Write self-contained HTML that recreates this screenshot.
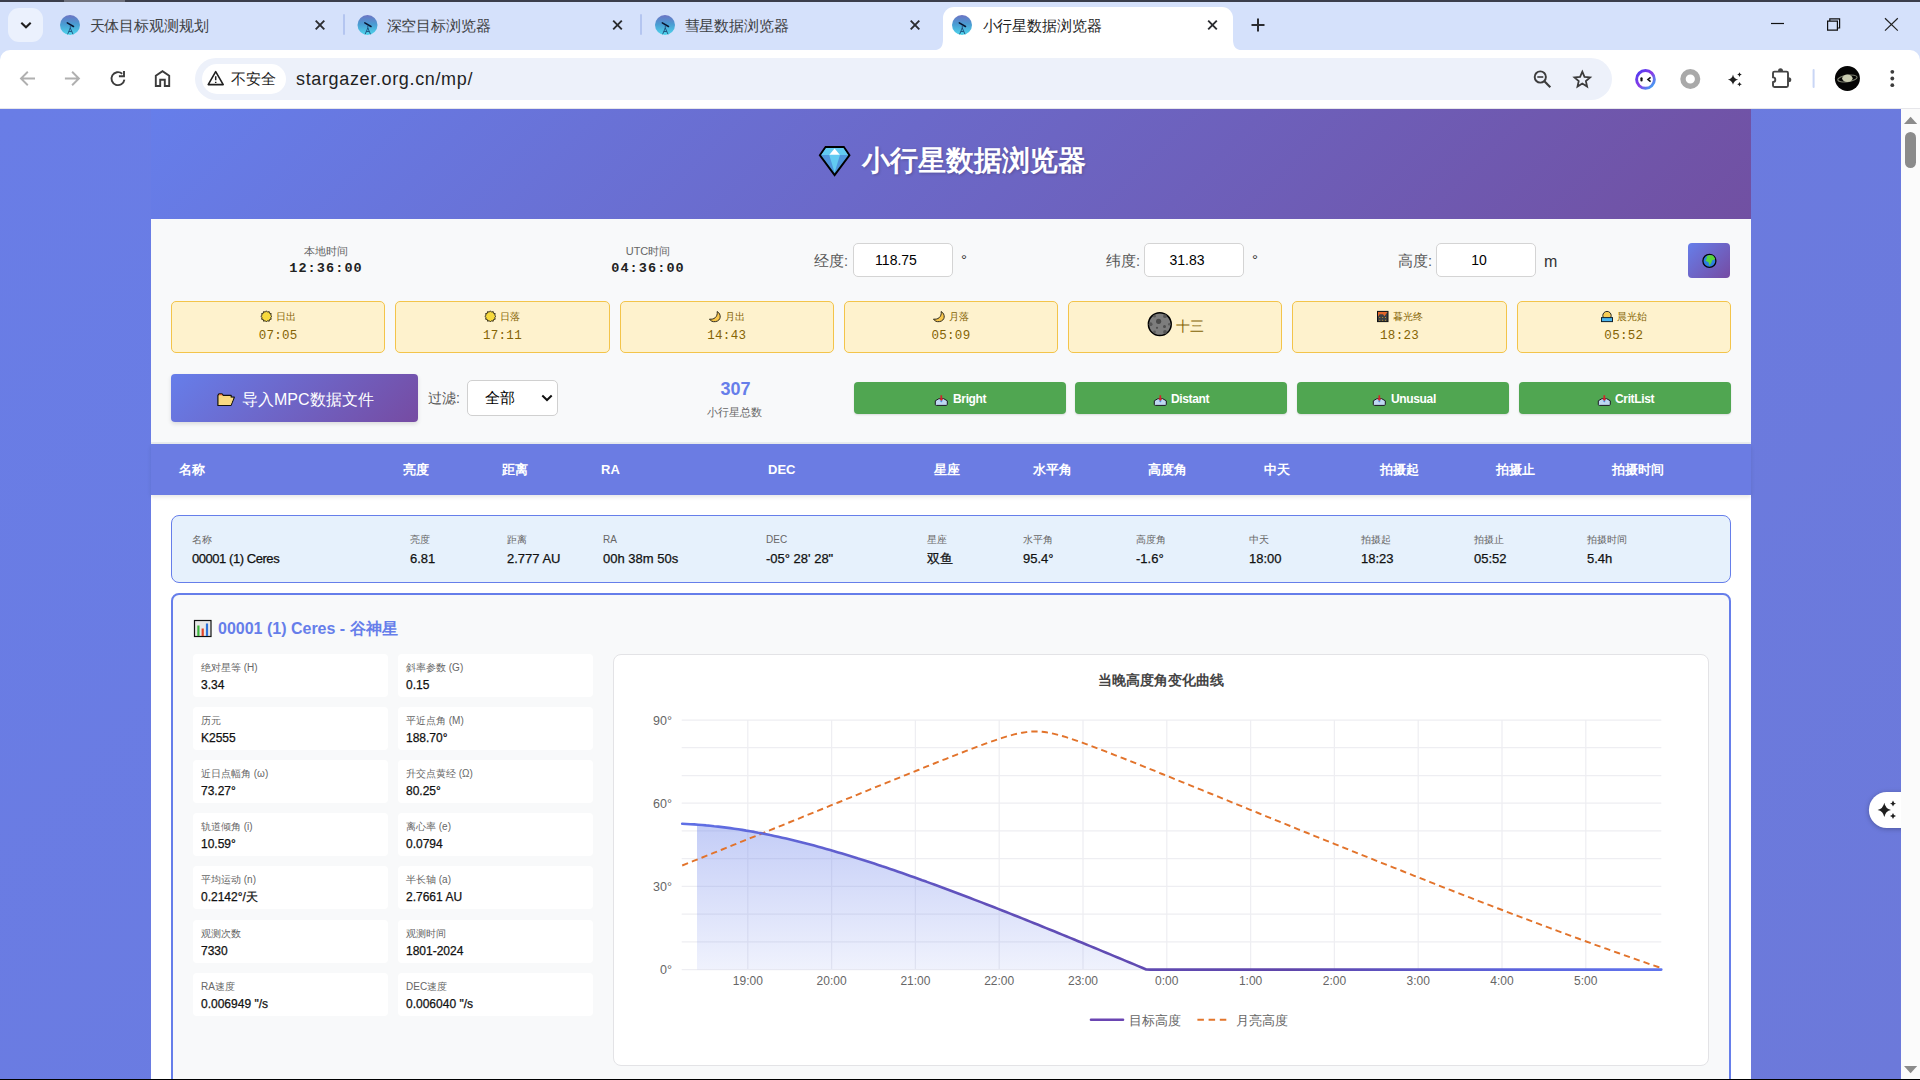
<!DOCTYPE html>
<html lang="zh">
<head>
<meta charset="utf-8">
<title>小行星数据浏览器</title>
<style>
*{box-sizing:border-box;margin:0;padding:0}
html,body{width:1920px;height:1080px;overflow:hidden;background:#fff}
body{font-family:"Liberation Sans",sans-serif;position:relative;color:#000}
.abs{position:absolute}
svg{display:block;position:absolute;overflow:visible}
/* ---------- browser chrome ---------- */
#topline{left:0;top:0;width:1920px;height:2px;background:#3b3e4b}
#topline2{left:64px;top:0;width:61px;height:2px;background:#6f717d}
#tabbar{left:0;top:2px;width:1920px;height:60px;background:#d5e1fb}
#tabsearch{left:8px;top:8px;width:35px;height:34px;border-radius:11px;background:#ebf1fd}
.tabtitle{position:absolute;top:16.5px;margin-left:-0.5px;font-size:15px;line-height:18px;color:#3d4043;white-space:nowrap;letter-spacing:-0.1px}
.tabsep{position:absolute;top:14px;width:2px;height:21px;background:#b4c5f0;border-radius:1px}
#acttab{left:943px;top:7px;width:290px;height:44px;background:#fff;border-radius:11px 11px 0 0}
#toolbar{left:0;top:50px;width:1920px;height:58px;background:#fff;border-radius:10px 10px 0 0}
#tbline{left:0;top:108px;width:1920px;height:1px;background:#e6e6ea}
#omni{left:195px;top:58px;width:1417px;height:42px;border-radius:21px;background:#edf1fa}
#chip{left:202px;top:64px;width:84px;height:30px;border-radius:15px;background:#fff}
#chiptxt{left:231px;top:70px;font-size:15px;line-height:18px;color:#1f1f1f;white-space:nowrap}
#url{left:296px;top:67px;font-size:18px;line-height:24px;color:#1f1f1f;white-space:nowrap;letter-spacing:0.65px}
/* ---------- page ---------- */
#page{left:0;top:109px;width:1901px;height:971px;background:linear-gradient(135deg,#697de6 0%,#6c79da 100%);overflow:hidden}
#sbar{left:1901px;top:109px;width:19px;height:971px;background:#fbfbfb}
#sthumb{left:1905px;top:132px;width:11px;height:36px;border-radius:6px;background:#8b8b8b}
#hdr{left:151px;top:0;width:1600px;height:110px;background:linear-gradient(135deg,#667eea 0%,#7150a2 100%)}
#title{left:711px;top:34px;text-align:left;color:#fff;font-size:28px;line-height:36px;font-weight:bold;white-space:nowrap;text-shadow:1px 1px 3px rgba(0,0,0,.22)}
#ctrl{left:151px;top:110px;width:1600px;height:223px;background:#f8f9fa}
#ctrlline{left:151px;top:333px;width:1600px;height:2px;background:#e9ecef}
#thead{left:151px;top:335px;width:1600px;height:51px;background:#6b7ce3;box-shadow:0 2px 4px rgba(0,0,0,.1);z-index:2}
#white{left:151px;top:386px;width:1600px;height:600px;background:#fff}

/* ---------- controls ---------- */
.tlabel{position:absolute;width:200px;text-align:center;font-size:11px;line-height:14px;color:#666;white-space:nowrap}
.tval{position:absolute;width:200px;text-align:center;font-family:"Liberation Mono",monospace;font-weight:bold;font-size:13.5px;line-height:16px;color:#222;white-space:nowrap;letter-spacing:1.1px}
.flabel{position:absolute;font-size:14.5px;line-height:18px;color:#555;white-space:nowrap}
.finput{position:absolute;width:100px;height:34px;background:#fff;border:1px solid #d4d4d4;border-radius:5px;font-size:14px;line-height:32px;text-align:center;color:#000;padding-right:14px}
.funit{position:absolute;font-size:15px;line-height:18px;color:#333}
#globe{left:1537px;top:24px;width:42px;height:35px;border-radius:4px;background:linear-gradient(135deg,#667eea 0%,#764ba2 100%)}
.sun{position:absolute;top:82px;width:214.3px;height:52px;background:#fef2cd;border:1px solid #f3c44a;border-radius:5px;color:#856404;text-align:center}
.sun .l{position:absolute;left:0;top:9px;width:100%;font-size:10px;line-height:12px;white-space:nowrap;padding-left:16px}
.sun .v{position:absolute;left:0;top:27px;width:100%;font-family:"Liberation Mono",monospace;font-size:12.5px;line-height:14px;letter-spacing:0.3px;white-space:nowrap}
#import{left:20px;top:155px;width:247px;height:48px;border-radius:4px;background:linear-gradient(135deg,#667eea 0%,#764ba2 100%);color:#fff;font-size:16px;line-height:51px;white-space:nowrap;padding-left:71px;box-shadow:0 2px 4px rgba(0,0,0,.12)}
#filtl{left:277px;top:170px;font-size:14px;line-height:18px;color:#555;white-space:nowrap}
#filts{left:316px;top:161px;width:91px;height:36px;background:#fff;border:1px solid #d0d0d0;border-radius:5px;font-size:14.5px;line-height:34px;padding-left:16.500px;color:#000}
#cnt{left:484.500px;top:159px;width:200px;text-align:center;font-size:18px;line-height:22px;font-weight:bold;color:#667eea}
#cntl{left:483px;top:186px;width:200px;text-align:center;font-size:11px;line-height:14px;color:#666;white-space:nowrap}
.gbtn{position:absolute;top:163px;width:211.5px;height:32px;border-radius:4px;background:#50a651;color:#fff;font-size:12px;font-weight:bold;line-height:34px;white-space:nowrap;box-shadow:0 1px 2px rgba(0,0,0,.12);letter-spacing:-0.35px}
.gbtn span{position:absolute;top:0}
/* ---------- table ---------- */
.th{position:absolute;top:18px;font-size:13px;line-height:16px;font-weight:bold;color:#fff;white-space:nowrap}
#row{left:20px;top:20px;width:1560px;height:68px;background:#e6f1fc;border:1px solid #667eea;border-radius:8px}
.rl{position:absolute;top:18px;font-size:10px;line-height:12px;color:#666;white-space:nowrap}
.rv{position:absolute;top:35px;font-size:13px;line-height:16px;color:#111;white-space:nowrap;-webkit-text-stroke:0.25px #111}
#detail{left:20px;top:98px;width:1560px;height:600px;background:#f8f9fa;border:2px solid #667eea;border-radius:8px}
#dtitle{left:45px;top:24px;font-size:16px;line-height:20px;font-weight:bold;color:#667eea;white-space:nowrap}
.pc{position:absolute;width:195px;height:43px;background:#fff;border-radius:4px}
.pc .l{position:absolute;left:8px;top:8px;font-size:10px;line-height:12px;color:#666;white-space:nowrap}
.pc .v{position:absolute;left:8px;top:24px;font-size:12px;line-height:15px;color:#111;white-space:nowrap;-webkit-text-stroke:0.25px #111}
#chart{left:440px;top:59px;width:1096px;height:412px;background:#fff;border:1px solid #e3e3e6;border-radius:8px}
#ctitle{left:0;top:17px;width:1094px;text-align:center;font-size:14px;line-height:16px;font-weight:bold;color:#444;white-space:nowrap}

.yl{position:absolute;left:622px;width:50px;text-align:right;font-size:12.5px;line-height:16px;color:#666;white-space:nowrap}
.xl{position:absolute;top:973px;width:60px;text-align:center;font-size:12px;line-height:16px;color:#666;white-space:nowrap}
.lg{position:absolute;top:1012.5px;font-size:12.7px;line-height:16px;color:#666;white-space:nowrap}
</style>
</head>
<body>
<!-- ======== browser chrome ======== -->
<div class="abs" id="tabbar"></div>
<div class="abs" id="topline"></div>
<div class="abs" id="topline2"></div>
<div class="abs" id="tabsearch"></div>
<div class="abs" id="toolbar"></div>
<div class="abs" id="acttab"></div>
<div class="abs" id="tbline"></div>
<div class="abs" id="omni"></div>
<div class="abs" id="chip"></div>
<div class="abs" id="chiptxt">不安全</div>
<div class="abs" id="url">stargazer.org.cn/mp/</div>
<div class="tabtitle" style="left:90px">天体目标观测规划</div>
<div class="tabtitle" style="left:387px">深空目标浏览器</div>
<div class="tabtitle" style="left:685px">彗星数据浏览器</div>
<div class="tabtitle" style="left:983px;color:#1f1f1f">小行星数据浏览器</div>
<div class="tabsep" style="left:343px"></div>
<div class="tabsep" style="left:640px"></div>

<svg id="chromeicons" width="1920" height="110" viewBox="0 0 1920 110" style="left:0;top:0">
  <defs>
    <linearGradient id="fav" x1="0" y1="0" x2="0" y2="1"><stop offset="0" stop-color="#6d74c4"/><stop offset=".45" stop-color="#4a9bd2"/><stop offset="1" stop-color="#4ed6ec"/></linearGradient>
    <linearGradient id="ext1" x1="0" y1="0" x2="1" y2="1"><stop offset="0" stop-color="#4a3cf2"/><stop offset=".5" stop-color="#8a3be6"/><stop offset="1" stop-color="#35b5f5"/></linearGradient>
  </defs>
  <!-- active tab flares -->
  <path d="M932.500 50.500 Q943 50.500 943 40 V50.500 Z" fill="#fff"/>
  <path d="M1243.500 50.500 Q1233 50.500 1233 40 V50.500 Z" fill="#fff"/>
  <!-- tab search chevron -->
  <path d="M21.3 22.8 L26 27.3 L30.7 22.8" stroke="#1f1f1f" stroke-width="2.1" fill="none"/>
  <!-- favicons -->
  <g transform="translate(70 25)">
      <circle cx="0" cy="0" r="10" fill="url(#fav)"/>
      <path d="M-2.700 -2.100 L3.500 1.500" stroke="#0b1630" stroke-width="1.500" stroke-linecap="round" fill="none"/>
      <path d="M0.3 0.5 L0.3 4 M0.3 3 L-2.4 9.3 M0.3 3 L3 9.3 M-1.2 6.5 L1.8 6.5" stroke="#1d4f7c" stroke-width="0.9" fill="none"/>
    </g>
  <g transform="translate(367.5 25)">
      <circle cx="0" cy="0" r="10" fill="url(#fav)"/>
      <path d="M-2.700 -2.100 L3.500 1.500" stroke="#0b1630" stroke-width="1.500" stroke-linecap="round" fill="none"/>
      <path d="M0.3 0.5 L0.3 4 M0.3 3 L-2.4 9.3 M0.3 3 L3 9.3 M-1.2 6.5 L1.8 6.5" stroke="#1d4f7c" stroke-width="0.9" fill="none"/>
    </g>
  <g transform="translate(665 25)">
      <circle cx="0" cy="0" r="10" fill="url(#fav)"/>
      <path d="M-2.700 -2.100 L3.500 1.500" stroke="#0b1630" stroke-width="1.500" stroke-linecap="round" fill="none"/>
      <path d="M0.3 0.5 L0.3 4 M0.3 3 L-2.4 9.3 M0.3 3 L3 9.3 M-1.2 6.5 L1.8 6.5" stroke="#1d4f7c" stroke-width="0.9" fill="none"/>
    </g>
  <g transform="translate(962 25)">
      <circle cx="0" cy="0" r="10" fill="url(#fav)"/>
      <path d="M-2.700 -2.100 L3.500 1.500" stroke="#0b1630" stroke-width="1.500" stroke-linecap="round" fill="none"/>
      <path d="M0.3 0.5 L0.3 4 M0.3 3 L-2.4 9.3 M0.3 3 L3 9.3 M-1.2 6.5 L1.8 6.5" stroke="#1d4f7c" stroke-width="0.9" fill="none"/>
    </g>
  <!-- tab close -->
  <path transform="translate(320 25)" d="M-4.3 -4.3 L4.3 4.3 M4.3 -4.3 L-4.3 4.3" stroke="#2b2c30" stroke-width="1.9" fill="none"/>
  <path transform="translate(617.5 25)" d="M-4.3 -4.3 L4.3 4.3 M4.3 -4.3 L-4.3 4.3" stroke="#2b2c30" stroke-width="1.9" fill="none"/>
  <path transform="translate(915 25)" d="M-4.3 -4.3 L4.3 4.3 M4.3 -4.3 L-4.3 4.3" stroke="#2b2c30" stroke-width="1.9" fill="none"/>
  <path transform="translate(1212.5 25)" d="M-4.3 -4.3 L4.3 4.3 M4.3 -4.3 L-4.3 4.3" stroke="#2b2c30" stroke-width="1.9" fill="none"/>
  <!-- new tab plus -->
  <path d="M1251.5 25 H1264.5 M1258 18.5 V31.5" stroke="#2b2c30" stroke-width="2" fill="none"/>
  <!-- window controls -->
  <path d="M1771 23.5 H1784" stroke="#111" stroke-width="1.2" fill="none"/>
  <path d="M1827.6 21.2 H1837.4 V30.2 H1827.6 Z M1829.8 21 V18.8 H1839.6 V28 H1837.6" stroke="#111" stroke-width="1.2" fill="none"/>
  <path d="M1885 18.2 L1897.8 30.6 M1897.8 18.2 L1885 30.6" stroke="#222" stroke-width="1.2" fill="none"/>
  <!-- nav: back / forward / reload / home -->
  <path d="M35 78.5 H21.5 M27.8 71.8 L21 78.5 L27.8 85.2" stroke="#b0b0b0" stroke-width="1.9" fill="none"/>
  <path d="M64.900 78.500 H78.400 M72.100 71.800 L78.900 78.500 L72.100 85.200" stroke="#b0b0b0" stroke-width="1.9" fill="none"/>
  <path d="M124.400 79.600 A6.500 6.500 0 1 1 122.200 73.700" stroke="#3c3c3c" stroke-width="1.900" fill="none"/>
  <path d="M124 71 V76.300 H118.900" stroke="#3c3c3c" stroke-width="1.900" fill="none"/>
  <path d="M155.8 86 V75.8 L162.5 71.2 L169.2 75.8 V86 H164.8 V79.8 H160.2 V86 Z" stroke="#3c3c3c" stroke-width="1.9" fill="none" stroke-linejoin="miter"/>
  <!-- not secure triangle -->
  <path d="M215.7 71.6 L223.2 84.6 H208.2 Z" stroke="#1f1f1f" stroke-width="1.6" fill="none" stroke-linejoin="round"/>
  <path d="M215.7 76.2 V80.3 M215.7 81.8 V83" stroke="#1f1f1f" stroke-width="1.5" fill="none"/>
  <!-- zoom-out magnifier -->
  <circle cx="1540.3" cy="77" r="5.6" stroke="#3c3c3c" stroke-width="1.9" fill="none"/>
  <path d="M1544.4 81.3 L1550.3 87.3" stroke="#3c3c3c" stroke-width="2.1" fill="none"/>
  <path d="M1537.3 77 H1543.3" stroke="#3c3c3c" stroke-width="1.6" fill="none"/>
  <!-- star -->
  <path d="M1582.3 71.7 L1584.5 76.9 L1590.1 77.4 L1585.9 81.1 L1587.1 86.6 L1582.3 83.6 L1577.5 86.6 L1578.7 81.1 L1574.5 77.4 L1580.1 76.9 Z" stroke="#3c3c3c" stroke-width="1.8" fill="none" stroke-linejoin="miter"/>
  <!-- ext 1 : ring with eyes -->
  <circle cx="1645.500" cy="79.400" r="8.900" stroke="url(#ext1)" stroke-width="2.900" fill="#fff"/>
  <rect x="1640.400" y="77.200" width="2.200" height="4.400" rx="1.100" fill="#111"/>
  <path d="M1650.600 77.400 L1648 79.500 L1650.600 81.600" stroke="#111" stroke-width="1.600" fill="none"/>
  <!-- ext 2 : grey ring -->
  <circle cx="1690.3" cy="79" r="7.3" stroke="#a9a9a9" stroke-width="5.4" fill="none"/>
  <!-- sparkle -->
  <path d="M1733 74.60000000000001 Q1733.816 78.884 1738.1 79.7 Q1733.816 80.516 1733 84.8 Q1732.184 80.516 1727.9 79.7 Q1732.184 78.884 1733 74.60000000000001 Z" fill="#1f1f1f"/>
  <path d="M1739.5 72.3 Q1739.868 74.232 1741.8 74.6 Q1739.868 74.96799999999999 1739.5 76.89999999999999 Q1739.132 74.96799999999999 1737.2 74.6 Q1739.132 74.232 1739.5 72.3 Z" fill="#1f1f1f"/>
  <path d="M1739.5 82.0 Q1739.868 83.932 1741.8 84.3 Q1739.868 84.66799999999999 1739.5 86.6 Q1739.132 84.66799999999999 1737.2 84.3 Q1739.132 83.932 1739.5 82.0 Z" fill="#1f1f1f"/>
  <!-- puzzle -->
  <path d="M1774.500 71.600 H1786.500 Q1788 71.600 1788 73.100 V85.500 Q1788 87 1786.500 87 H1774.500 Q1773 87 1773 85.500 V82 A2.300 2.300 0 0 0 1773 77.400 V73.100 Q1773 71.600 1774.500 71.600 Z" stroke="#444" stroke-width="1.900" fill="none" stroke-linejoin="round"/>
  <path d="M1778 71 A2.500 2.700 0 0 1 1783 71 Z" fill="#444"/>
  <path d="M1788.600 77.200 A2.700 2.500 0 0 1 1788.600 82.200 Z" fill="#444"/>
  <!-- separator -->
  <rect x="1812.600" y="69" width="2" height="19" rx="1" fill="#c9d6f5"/>
  <!-- avatar -->
  <circle cx="1847.4" cy="78.500" r="12.5" fill="#050505"/>
  <ellipse cx="1847.400" cy="78.500" rx="9.800" ry="3.300" stroke="#7d8070" stroke-width="1.100" fill="none" transform="rotate(-8 1847.4 78.5)"/>
  <ellipse cx="1847.400" cy="78.300" rx="5.200" ry="3.700" fill="#c9cbb0"/>
  <!-- menu dots -->
  <circle cx="1892.300" cy="71.800" r="1.900" fill="#3c3c3c"/><circle cx="1892.300" cy="78.500" r="1.900" fill="#3c3c3c"/><circle cx="1892.300" cy="85.200" r="1.900" fill="#3c3c3c"/>
</svg>
<!-- ======== page ======== -->
<div class="abs" id="page">
  <div class="abs" id="hdr"><div class="abs" id="title">小行星数据浏览器</div></div>
  <div class="abs" id="ctrl">
  <div class="tlabel" style="left:75px;top:25px">本地时间</div><div class="tval" style="left:75px;top:42px">12:36:00</div>
  <div class="tlabel" style="left:397px;top:25px">UTC时间</div><div class="tval" style="left:397px;top:42px">04:36:00</div>
  <div class="flabel" style="left:663px;top:33px">经度:</div><div class="finput" style="left:702px;top:24px">118.75</div><div class="funit" style="left:810px;top:32px">°</div>
  <div class="flabel" style="left:955px;top:33px">纬度:</div><div class="finput" style="left:993px;top:24px">31.83</div><div class="funit" style="left:1101px;top:32px">°</div>
  <div class="flabel" style="left:1247px;top:33px">高度:</div><div class="finput" style="left:1285px;top:24px">10</div><div class="funit" style="left:1393px;top:34px;font-size:16px">m</div>
  <div class="abs" id="globe"></div>
<div class="sun" style="left:20.0px"><div class="l">日出</div><div class="v">07:05</div></div>
<div class="sun" style="left:244.3px"><div class="l">日落</div><div class="v">17:11</div></div>
<div class="sun" style="left:468.6px"><div class="l">月出</div><div class="v">14:43</div></div>
<div class="sun" style="left:692.8px"><div class="l">月落</div><div class="v">05:09</div></div>
<div class="sun" style="left:917.1px"><div class="abs" style="left:107px;top:14.500px;font-size:13.600px;line-height:20px;white-space:nowrap">十三</div></div>
<div class="sun" style="left:1141.4px"><div class="l">暮光终</div><div class="v">18:23</div></div>
<div class="sun" style="left:1365.7px"><div class="l">晨光始</div><div class="v">05:52</div></div>

  <div class="abs" id="import">导入MPC数据文件</div>
  <div class="abs" id="filtl">过滤:</div>
  <div class="abs" id="filts">全部</div>
  <div class="abs" id="cnt">307</div><div class="abs" id="cntl">小行星总数</div>
  <div class="gbtn" style="left:703px"><span style="left:99px">Bright</span></div>
  <div class="gbtn" style="left:924px"><span style="left:96px">Distant</span></div>
  <div class="gbtn" style="left:1146px"><span style="left:94px">Unusual</span></div>
  <div class="gbtn" style="left:1368px"><span style="left:96px">CritList</span></div>
</div>
  <div class="abs" id="ctrlline"></div>
  <div class="abs" id="thead"><div class="th" style="left:28px">名称</div><div class="th" style="left:252px">亮度</div><div class="th" style="left:351px">距离</div><div class="th" style="left:450px">RA</div><div class="th" style="left:617px">DEC</div><div class="th" style="left:783px">星座</div><div class="th" style="left:882px">水平角</div><div class="th" style="left:997px">高度角</div><div class="th" style="left:1113px">中天</div><div class="th" style="left:1229px">拍摄起</div><div class="th" style="left:1345px">拍摄止</div><div class="th" style="left:1461px">拍摄时间</div></div>
  <div class="abs" id="white">
  <div class="abs" id="row"><div class="rl" style="left:20px">名称</div><div class="rv" style="left:20px;letter-spacing:-0.45px">00001 (1) Ceres</div><div class="rl" style="left:238px">亮度</div><div class="rv" style="left:238px">6.81</div><div class="rl" style="left:335px">距离</div><div class="rv" style="left:335px">2.777 AU</div><div class="rl" style="left:431px">RA</div><div class="rv" style="left:431px">00h 38m 50s</div><div class="rl" style="left:594px">DEC</div><div class="rv" style="left:594px">-05° 28' 28"</div><div class="rl" style="left:755px">星座</div><div class="rv" style="left:755px">双鱼</div><div class="rl" style="left:851px">水平角</div><div class="rv" style="left:851px">95.4°</div><div class="rl" style="left:964px">高度角</div><div class="rv" style="left:964px">-1.6°</div><div class="rl" style="left:1077px">中天</div><div class="rv" style="left:1077px">18:00</div><div class="rl" style="left:1189px">拍摄起</div><div class="rv" style="left:1189px">18:23</div><div class="rl" style="left:1302px">拍摄止</div><div class="rv" style="left:1302px">05:52</div><div class="rl" style="left:1415px">拍摄时间</div><div class="rv" style="left:1415px">5.4h</div></div>
  <div class="abs" id="detail">
    <div class="abs" id="dtitle">00001 (1) Ceres - 谷神星</div>
    <div class="pc" style="left:20px;top:59px"><div class="l">绝对星等 (H)</div><div class="v">3.34</div></div>
<div class="pc" style="left:225px;top:59px"><div class="l">斜率参数 (G)</div><div class="v">0.15</div></div>
<div class="pc" style="left:20px;top:112px"><div class="l">历元</div><div class="v">K2555</div></div>
<div class="pc" style="left:225px;top:112px"><div class="l">平近点角 (M)</div><div class="v">188.70°</div></div>
<div class="pc" style="left:20px;top:165px"><div class="l">近日点幅角 (ω)</div><div class="v">73.27°</div></div>
<div class="pc" style="left:225px;top:165px"><div class="l">升交点黄经 (Ω)</div><div class="v">80.25°</div></div>
<div class="pc" style="left:20px;top:218px"><div class="l">轨道倾角 (i)</div><div class="v">10.59°</div></div>
<div class="pc" style="left:225px;top:218px"><div class="l">离心率 (e)</div><div class="v">0.0794</div></div>
<div class="pc" style="left:20px;top:271px"><div class="l">平均运动 (n)</div><div class="v">0.2142°/天</div></div>
<div class="pc" style="left:225px;top:271px"><div class="l">半长轴 (a)</div><div class="v">2.7661 AU</div></div>
<div class="pc" style="left:20px;top:325px"><div class="l">观测次数</div><div class="v">7330</div></div>
<div class="pc" style="left:225px;top:325px"><div class="l">观测时间</div><div class="v">1801-2024</div></div>
<div class="pc" style="left:20px;top:378px"><div class="l">RA速度</div><div class="v">0.006949 "/s</div></div>
<div class="pc" style="left:225px;top:378px"><div class="l">DEC速度</div><div class="v">0.006040 "/s</div></div>

    <div class="abs" id="chart"><div class="abs" id="ctitle">当晚高度角变化曲线</div></div>
  </div>
</div>
</div>
<div class="abs" id="sbar"></div>
<div class="abs" id="sthumb"></div>
<!-- chart -->
<svg id="chartsvg" width="1920" height="1080" viewBox="0 0 1920 1080" style="left:0;top:0">
<defs><linearGradient id="cfill" gradientUnits="userSpaceOnUse" x1="0" y1="720" x2="0" y2="970"><stop offset="0" stop-color="#667eea" stop-opacity="0.6"/><stop offset="1" stop-color="#667eea" stop-opacity="0.1"/></linearGradient>
<linearGradient id="cline" gradientUnits="userSpaceOnUse" x1="682.2" y1="0" x2="1661.3" y2="0"><stop offset="0" stop-color="#5f70e6"/><stop offset="0.3" stop-color="#6150ba"/><stop offset="0.62" stop-color="#5f45aa"/><stop offset="0.85" stop-color="#5c63dc"/><stop offset="1" stop-color="#5f74ee"/></linearGradient></defs>
<path d="M681.7 969.6 H1661.3 M681.7 941.9 H1661.3 M681.7 914.1 H1661.3 M681.7 886.4 H1661.3 M681.7 858.7 H1661.3 M681.7 830.9 H1661.3 M681.7 803.2 H1661.3 M681.7 775.5 H1661.3 M681.7 747.7 H1661.3 M681.7 720.0 H1661.3 M747.8 720 V969.6 M831.6 720 V969.6 M915.4 720 V969.6 M999.2 720 V969.6 M1083.0 720 V969.6 M1166.8 720 V969.6 M1250.6 720 V969.6 M1334.4 720 V969.6 M1418.2 720 V969.6 M1502.0 720 V969.6 M1585.8 720 V969.6" stroke="#eeeef2" stroke-width="1.25" fill="none"/>
<path d="M697.0 824.6 L701.0 824.9 L705.0 825.3 L709.0 825.6 L713.0 826.0 L717.0 826.5 L721.0 826.9 L725.0 827.4 L729.0 827.9 L733.0 828.5 L737.0 829.1 L741.0 829.7 L745.0 830.4 L749.0 831.0 L753.0 831.7 L757.0 832.5 L761.0 833.2 L765.0 834.0 L769.0 834.8 L773.0 835.6 L777.0 836.5 L781.0 837.4 L785.0 838.3 L789.0 839.2 L793.0 840.2 L797.0 841.2 L801.0 842.2 L805.0 843.2 L809.0 844.2 L813.0 845.3 L817.0 846.3 L821.0 847.4 L825.0 848.6 L829.0 849.7 L833.0 850.8 L837.0 852.0 L841.0 853.2 L845.0 854.4 L849.0 855.6 L853.0 856.8 L857.0 858.1 L861.0 859.3 L865.0 860.6 L869.0 861.9 L873.0 863.2 L877.0 864.5 L881.0 865.9 L885.0 867.2 L889.0 868.5 L893.0 869.9 L897.0 871.3 L901.0 872.7 L905.0 874.1 L909.0 875.5 L913.0 876.9 L917.0 878.3 L921.0 879.7 L925.0 881.2 L929.0 882.6 L933.0 884.1 L937.0 885.6 L941.0 887.0 L945.0 888.5 L949.0 890.0 L953.0 891.5 L957.0 893.0 L961.0 894.5 L965.0 896.0 L969.0 897.6 L973.0 899.1 L977.0 900.6 L981.0 902.2 L985.0 903.7 L989.0 905.3 L993.0 906.8 L997.0 908.4 L1001.0 910.0 L1005.0 911.6 L1009.0 913.1 L1013.0 914.7 L1017.0 916.3 L1021.0 917.9 L1025.0 919.5 L1029.0 921.1 L1033.0 922.7 L1037.0 924.3 L1041.0 926.0 L1045.0 927.6 L1049.0 929.2 L1053.0 930.8 L1057.0 932.5 L1061.0 934.1 L1065.0 935.7 L1069.0 937.4 L1073.0 939.0 L1077.0 940.7 L1081.0 942.3 L1085.0 944.0 L1089.0 945.6 L1093.0 947.3 L1097.0 948.9 L1101.0 950.6 L1105.0 952.3 L1109.0 953.9 L1113.0 955.6 L1117.0 957.3 L1121.0 958.9 L1125.0 960.6 L1129.0 962.3 L1133.0 963.9 L1137.0 965.6 L1141.0 967.3 L1145.0 969.0 L1149.0 969.6 L1153.0 969.6 L1157.0 969.6 L1161.0 969.6 L1165.0 969.6 L1169.0 969.6 L1173.0 969.6 L1177.0 969.6 L1181.0 969.6 L1185.0 969.6 L1189.0 969.6 L1193.0 969.6 L1197.0 969.6 L1201.0 969.6 L1205.0 969.6 L1209.0 969.6 L1213.0 969.6 L1217.0 969.6 L1221.0 969.6 L1225.0 969.6 L1229.0 969.6 L1233.0 969.6 L1237.0 969.6 L1241.0 969.6 L1245.0 969.6 L1249.0 969.6 L1253.0 969.6 L1257.0 969.6 L1261.0 969.6 L1265.0 969.6 L1269.0 969.6 L1273.0 969.6 L1277.0 969.6 L1281.0 969.6 L1285.0 969.6 L1289.0 969.6 L1293.0 969.6 L1297.0 969.6 L1301.0 969.6 L1305.0 969.6 L1309.0 969.6 L1313.0 969.6 L1317.0 969.6 L1321.0 969.6 L1325.0 969.6 L1329.0 969.6 L1333.0 969.6 L1337.0 969.6 L1341.0 969.6 L1345.0 969.6 L1349.0 969.6 L1353.0 969.6 L1357.0 969.6 L1361.0 969.6 L1365.0 969.6 L1369.0 969.6 L1373.0 969.6 L1377.0 969.6 L1381.0 969.6 L1385.0 969.6 L1389.0 969.6 L1393.0 969.6 L1397.0 969.6 L1401.0 969.6 L1405.0 969.6 L1409.0 969.6 L1413.0 969.6 L1417.0 969.6 L1421.0 969.6 L1425.0 969.6 L1429.0 969.6 L1433.0 969.6 L1437.0 969.6 L1441.0 969.6 L1445.0 969.6 L1449.0 969.6 L1453.0 969.6 L1457.0 969.6 L1461.0 969.6 L1465.0 969.6 L1469.0 969.6 L1473.0 969.6 L1477.0 969.6 L1481.0 969.6 L1485.0 969.6 L1489.0 969.6 L1493.0 969.6 L1497.0 969.6 L1501.0 969.6 L1505.0 969.6 L1509.0 969.6 L1513.0 969.6 L1517.0 969.6 L1521.0 969.6 L1525.0 969.6 L1529.0 969.6 L1533.0 969.6 L1537.0 969.6 L1541.0 969.6 L1545.0 969.6 L1549.0 969.6 L1553.0 969.6 L1557.0 969.6 L1561.0 969.6 L1565.0 969.6 L1569.0 969.6 L1573.0 969.6 L1577.0 969.6 L1581.0 969.6 L1585.0 969.6 L1589.0 969.6 L1593.0 969.6 L1597.0 969.6 L1601.0 969.6 L1605.0 969.6 L1609.0 969.6 L1613.0 969.6 L1617.0 969.6 L1621.0 969.6 L1625.0 969.6 L1629.0 969.6 L1633.0 969.6 L1637.0 969.6 L1641.0 969.6 L1645.0 969.6 L1649.0 969.6 L1653.0 969.6 L1657.0 969.6 L1661.0 969.6 L1661.3 969.6 L1661.3 969.6 L697.0 969.6 Z" fill="url(#cfill)"/>
<path d="M682.2 865.5 L686.2 863.9 L690.2 862.3 L694.2 860.7 L698.2 859.1 L702.2 857.5 L706.2 855.9 L710.2 854.3 L714.2 852.7 L718.2 851.1 L722.2 849.5 L726.2 847.9 L730.2 846.3 L734.2 844.7 L738.2 843.0 L742.2 841.4 L746.2 839.8 L750.2 838.2 L754.2 836.6 L758.2 835.0 L762.2 833.4 L766.2 831.7 L770.2 830.1 L774.2 828.5 L778.2 826.9 L782.2 825.3 L786.2 823.6 L790.2 822.0 L794.2 820.4 L798.2 818.8 L802.2 817.1 L806.2 815.5 L810.2 813.9 L814.2 812.3 L818.2 810.6 L822.2 809.0 L826.2 807.4 L830.2 805.7 L834.2 804.1 L838.2 802.5 L842.2 800.8 L846.2 799.2 L850.2 797.6 L854.2 796.0 L858.2 794.3 L862.2 792.7 L866.2 791.1 L870.2 789.4 L874.2 787.8 L878.2 786.2 L882.2 784.6 L886.2 782.9 L890.2 781.3 L894.2 779.7 L898.2 778.1 L902.2 776.4 L906.2 774.8 L910.2 773.2 L914.2 771.6 L918.2 770.0 L922.2 768.4 L926.2 766.7 L930.2 765.1 L934.2 763.5 L938.2 761.9 L942.2 760.3 L946.2 758.8 L950.2 757.2 L954.2 755.6 L958.2 754.0 L962.2 752.5 L966.2 750.9 L970.2 749.4 L974.2 747.9 L978.2 746.3 L982.2 744.9 L986.2 743.4 L990.2 742.0 L994.2 740.6 L998.2 739.2 L1002.2 737.9 L1006.2 736.6 L1010.2 735.5 L1014.2 734.4 L1018.2 733.5 L1022.2 732.7 L1026.2 732.1 L1030.2 731.6 L1034.2 731.5 L1038.2 731.5 L1042.2 731.8 L1046.2 732.3 L1050.2 733.0 L1054.2 733.9 L1058.2 734.9 L1062.2 736.0 L1066.2 737.2 L1070.2 738.5 L1074.2 739.8 L1078.2 741.2 L1082.2 742.6 L1086.2 744.1 L1090.2 745.6 L1094.2 747.1 L1098.2 748.6 L1102.2 750.1 L1106.2 751.7 L1110.2 753.2 L1114.2 754.8 L1118.2 756.4 L1122.2 757.9 L1126.2 759.5 L1130.2 761.1 L1134.2 762.7 L1138.2 764.3 L1142.2 765.9 L1146.2 767.5 L1150.2 769.1 L1154.2 770.7 L1158.2 772.4 L1162.2 774.0 L1166.2 775.6 L1170.2 777.2 L1174.2 778.8 L1178.2 780.5 L1182.2 782.1 L1186.2 783.7 L1190.2 785.3 L1194.2 787.0 L1198.2 788.6 L1202.2 790.2 L1206.2 791.9 L1210.2 793.5 L1214.2 795.1 L1218.2 796.7 L1222.2 798.4 L1226.2 800.0 L1230.2 801.6 L1234.2 803.3 L1238.2 804.9 L1242.2 806.5 L1246.2 808.2 L1250.2 809.8 L1254.2 811.4 L1258.2 813.0 L1262.2 814.7 L1266.2 816.3 L1270.2 817.9 L1274.2 819.5 L1278.2 821.2 L1282.2 822.8 L1286.2 824.4 L1290.2 826.0 L1294.2 827.7 L1298.2 829.3 L1302.2 830.9 L1306.2 832.5 L1310.2 834.1 L1314.2 835.8 L1318.2 837.4 L1322.2 839.0 L1326.2 840.6 L1330.2 842.2 L1334.2 843.8 L1338.2 845.4 L1342.2 847.0 L1346.2 848.7 L1350.2 850.3 L1354.2 851.9 L1358.2 853.5 L1362.2 855.1 L1366.2 856.7 L1370.2 858.3 L1374.2 859.9 L1378.2 861.5 L1382.2 863.1 L1386.2 864.7 L1390.2 866.3 L1394.2 867.8 L1398.2 869.4 L1402.2 871.0 L1406.2 872.6 L1410.2 874.2 L1414.2 875.8 L1418.2 877.3 L1422.2 878.9 L1426.2 880.5 L1430.2 882.1 L1434.2 883.7 L1438.2 885.2 L1442.2 886.8 L1446.2 888.4 L1450.2 889.9 L1454.2 891.5 L1458.2 893.0 L1462.2 894.6 L1466.2 896.2 L1470.2 897.7 L1474.2 899.3 L1478.2 900.8 L1482.2 902.3 L1486.2 903.9 L1490.2 905.4 L1494.2 907.0 L1498.2 908.5 L1502.2 910.0 L1506.2 911.6 L1510.2 913.1 L1514.2 914.6 L1518.2 916.1 L1522.2 917.6 L1526.2 919.2 L1530.2 920.7 L1534.2 922.2 L1538.2 923.7 L1542.2 925.2 L1546.2 926.7 L1550.2 928.2 L1554.2 929.7 L1558.2 931.2 L1562.2 932.6 L1566.2 934.1 L1570.2 935.6 L1574.2 937.1 L1578.2 938.5 L1582.2 940.0 L1586.2 941.5 L1590.2 942.9 L1594.2 944.4 L1598.2 945.8 L1602.2 947.3 L1606.2 948.7 L1610.2 950.2 L1614.2 951.6 L1618.2 953.0 L1622.2 954.4 L1626.2 955.9 L1630.2 957.3 L1634.2 958.7 L1638.2 960.1 L1642.2 961.5 L1646.2 962.9 L1650.2 964.3 L1654.2 965.6 L1658.2 967.0 L1661.3 968.1" stroke="#e2732b" stroke-width="1.9" stroke-dasharray="6.3 4.1" fill="none"/>
<path d="M682.2 823.8 L686.2 824.0 L690.2 824.2 L694.2 824.4 L698.2 824.7 L702.2 825.0 L706.2 825.4 L710.2 825.7 L714.2 826.2 L718.2 826.6 L722.2 827.1 L726.2 827.6 L730.2 828.1 L734.2 828.7 L738.2 829.3 L742.2 829.9 L746.2 830.6 L750.2 831.2 L754.2 831.9 L758.2 832.7 L762.2 833.4 L766.2 834.2 L770.2 835.1 L774.2 835.9 L778.2 836.8 L782.2 837.7 L786.2 838.6 L790.2 839.5 L794.2 840.5 L798.2 841.5 L802.2 842.5 L806.2 843.5 L810.2 844.5 L814.2 845.6 L818.2 846.7 L822.2 847.8 L826.2 848.9 L830.2 850.0 L834.2 851.2 L838.2 852.4 L842.2 853.6 L846.2 854.8 L850.2 856.0 L854.2 857.2 L858.2 858.5 L862.2 859.7 L866.2 861.0 L870.2 862.3 L874.2 863.6 L878.2 864.9 L882.2 866.3 L886.2 867.6 L890.2 868.9 L894.2 870.3 L898.2 871.7 L902.2 873.1 L906.2 874.5 L910.2 875.9 L914.2 877.3 L918.2 878.7 L922.2 880.2 L926.2 881.6 L930.2 883.1 L934.2 884.5 L938.2 886.0 L942.2 887.5 L946.2 889.0 L950.2 890.5 L954.2 892.0 L958.2 893.5 L962.2 895.0 L966.2 896.5 L970.2 898.0 L974.2 899.6 L978.2 901.1 L982.2 902.6 L986.2 904.2 L990.2 905.8 L994.2 907.3 L998.2 908.9 L1002.2 910.5 L1006.2 912.0 L1010.2 913.6 L1014.2 915.2 L1018.2 916.8 L1022.2 918.4 L1026.2 920.0 L1030.2 921.6 L1034.2 923.2 L1038.2 924.8 L1042.2 926.5 L1046.2 928.1 L1050.2 929.7 L1054.2 931.3 L1058.2 933.0 L1062.2 934.6 L1066.2 936.2 L1070.2 937.9 L1074.2 939.5 L1078.2 941.2 L1082.2 942.8 L1086.2 944.5 L1090.2 946.1 L1094.2 947.8 L1098.2 949.4 L1102.2 951.1 L1106.2 952.8 L1110.2 954.4 L1114.2 956.1 L1118.2 957.8 L1122.2 959.4 L1126.2 961.1 L1130.2 962.8 L1134.2 964.4 L1138.2 966.1 L1142.2 967.8 L1146.2 969.5 L1150.2 969.6 L1154.2 969.6 L1158.2 969.6 L1162.2 969.6 L1166.2 969.6 L1170.2 969.6 L1174.2 969.6 L1178.2 969.6 L1182.2 969.6 L1186.2 969.6 L1190.2 969.6 L1194.2 969.6 L1198.2 969.6 L1202.2 969.6 L1206.2 969.6 L1210.2 969.6 L1214.2 969.6 L1218.2 969.6 L1222.2 969.6 L1226.2 969.6 L1230.2 969.6 L1234.2 969.6 L1238.2 969.6 L1242.2 969.6 L1246.2 969.6 L1250.2 969.6 L1254.2 969.6 L1258.2 969.6 L1262.2 969.6 L1266.2 969.6 L1270.2 969.6 L1274.2 969.6 L1278.2 969.6 L1282.2 969.6 L1286.2 969.6 L1290.2 969.6 L1294.2 969.6 L1298.2 969.6 L1302.2 969.6 L1306.2 969.6 L1310.2 969.6 L1314.2 969.6 L1318.2 969.6 L1322.2 969.6 L1326.2 969.6 L1330.2 969.6 L1334.2 969.6 L1338.2 969.6 L1342.2 969.6 L1346.2 969.6 L1350.2 969.6 L1354.2 969.6 L1358.2 969.6 L1362.2 969.6 L1366.2 969.6 L1370.2 969.6 L1374.2 969.6 L1378.2 969.6 L1382.2 969.6 L1386.2 969.6 L1390.2 969.6 L1394.2 969.6 L1398.2 969.6 L1402.2 969.6 L1406.2 969.6 L1410.2 969.6 L1414.2 969.6 L1418.2 969.6 L1422.2 969.6 L1426.2 969.6 L1430.2 969.6 L1434.2 969.6 L1438.2 969.6 L1442.2 969.6 L1446.2 969.6 L1450.2 969.6 L1454.2 969.6 L1458.2 969.6 L1462.2 969.6 L1466.2 969.6 L1470.2 969.6 L1474.2 969.6 L1478.2 969.6 L1482.2 969.6 L1486.2 969.6 L1490.2 969.6 L1494.2 969.6 L1498.2 969.6 L1502.2 969.6 L1506.2 969.6 L1510.2 969.6 L1514.2 969.6 L1518.2 969.6 L1522.2 969.6 L1526.2 969.6 L1530.2 969.6 L1534.2 969.6 L1538.2 969.6 L1542.2 969.6 L1546.2 969.6 L1550.2 969.6 L1554.2 969.6 L1558.2 969.6 L1562.2 969.6 L1566.2 969.6 L1570.2 969.6 L1574.2 969.6 L1578.2 969.6 L1582.2 969.6 L1586.2 969.6 L1590.2 969.6 L1594.2 969.6 L1598.2 969.6 L1602.2 969.6 L1606.2 969.6 L1610.2 969.6 L1614.2 969.6 L1618.2 969.6 L1622.2 969.6 L1626.2 969.6 L1630.2 969.6 L1634.2 969.6 L1638.2 969.6 L1642.2 969.6 L1646.2 969.6 L1650.2 969.6 L1654.2 969.6 L1658.2 969.6 L1661.3 969.6" stroke="url(#cline)" stroke-width="2.6" fill="none" stroke-linejoin="round" stroke-linecap="round"/>
<path d="M1091 1019.8 H1123" stroke="#6a45b2" stroke-width="2.6" stroke-linecap="round" fill="none"/>
<path d="M1197.4 1019.8 H1227" stroke="#e3762c" stroke-width="1.9" stroke-dasharray="6.5 4.7" fill="none"/>
</svg>
<div id="chartlabels"><div class="yl" style="top:962.4px">0°</div>
<div class="yl" style="top:879.2px">30°</div>
<div class="yl" style="top:796.0px">60°</div>
<div class="yl" style="top:712.8px">90°</div>
<div class="xl" style="left:717.8px">19:00</div>
<div class="xl" style="left:801.6px">20:00</div>
<div class="xl" style="left:885.4px">21:00</div>
<div class="xl" style="left:969.2px">22:00</div>
<div class="xl" style="left:1053.0px">23:00</div>
<div class="xl" style="left:1136.8px">0:00</div>
<div class="xl" style="left:1220.6px">1:00</div>
<div class="xl" style="left:1304.4px">2:00</div>
<div class="xl" style="left:1388.2px">3:00</div>
<div class="xl" style="left:1472.0px">4:00</div>
<div class="xl" style="left:1555.8px">5:00</div>
<div class="lg" style="left:1128.500px">目标高度</div><div class="lg" style="left:1235.500px">月亮高度</div></div>
<svg id="pageicons" width="1920" height="1080" viewBox="0 0 1920 1080" style="left:0;top:0">
<g>
<path d="M825.6 147 H843.8 L849.4 155.300 L834.600 175 L819.900 155.300 Z" fill="#4f96dc" stroke="#000" stroke-width="2" stroke-linejoin="miter"/>
<path d="M826.1 148 H843.3 L848 155 H821.300 Z" fill="#62cbf2"/>
<path d="M829.2 155 H840 L834.600 172.600 Z" fill="#62cbf2"/>
<path d="M834.6 148.600 L839.800 154.700 H829.400 Z" fill="#fff"/>
</g>
<polygon points="272.00,316.40 270.65,317.54 271.25,319.20 269.51,319.51 269.20,321.25 267.54,320.65 266.40,322.00 265.26,320.65 263.60,321.25 263.29,319.51 261.55,319.20 262.15,317.54 260.80,316.40 262.15,315.26 261.55,313.60 263.29,313.29 263.60,311.55 265.26,312.15 266.40,310.80 267.54,312.15 269.20,311.55 269.51,313.29 271.25,313.60 270.65,315.26" fill="#f6d93c" stroke="#3b3420" stroke-width="1"/>
<polygon points="496.00,316.40 494.65,317.54 495.25,319.20 493.51,319.51 493.20,321.25 491.54,320.65 490.40,322.00 489.26,320.65 487.60,321.25 487.29,319.51 485.55,319.20 486.15,317.54 484.80,316.40 486.15,315.26 485.55,313.60 487.29,313.29 487.60,311.55 489.26,312.15 490.40,310.80 491.54,312.15 493.20,311.55 493.51,313.29 495.25,313.60 494.65,315.26" fill="#f6d93c" stroke="#3b3420" stroke-width="1"/>
<path transform="translate(709 311)" d="M8.2 0.5 C12.6 3.2 12.3 9.6 6.600 10.6 C3.800 11.1 1.400 9.900 0.500 8.100 C4.600 8.800 8.900 6.300 8.200 0.500 Z" fill="#f8c64b" stroke="#2e2a1c" stroke-width="1" stroke-linejoin="round"/>
<path transform="translate(933 311)" d="M8.2 0.5 C12.6 3.2 12.3 9.6 6.600 10.6 C3.800 11.1 1.400 9.900 0.500 8.100 C4.600 8.800 8.900 6.300 8.200 0.500 Z" fill="#f8c64b" stroke="#2e2a1c" stroke-width="1" stroke-linejoin="round"/>
<g>
<circle cx="1159.8" cy="324.2" r="11.4" fill="#7d7d7d" stroke="#000" stroke-width="1.500"/>
<circle cx="1158.600" cy="321.300" r="2.600" fill="#4a4a4a"/><circle cx="1164.500" cy="326.500" r="1.500" fill="#4f4f4f"/><circle cx="1157" cy="327.800" r="1.100" fill="#4f4f4f"/>
<circle cx="1165" cy="316.200" r="1.900" fill="#555"/><circle cx="1150.600" cy="324.200" r="1.900" fill="#555"/><circle cx="1165" cy="332" r="1.900" fill="#555"/><circle cx="1154.500" cy="316.200" r="1.400" fill="#5a5a5a"/><circle cx="1154.500" cy="332" r="1.400" fill="#5a5a5a"/><circle cx="1169.300" cy="324.200" r="1.300" fill="#5a5a5a"/>
</g>
<g>
<rect x="1377.500" y="311.400" width="10.500" height="10.200" fill="#3c3f45" stroke="#111" stroke-width="1"/>
<path d="M1378 311.900 H1387.500 L1384.500 316.200 L1383 314.300 H1379.600 L1378 316.800 Z" fill="#e4672b"/>
<rect x="1379.300" y="317" width="0.900" height="0.900" fill="#e0a92a"/><rect x="1382.200" y="317" width="0.900" height="0.900" fill="#e0a92a"/><rect x="1385.100" y="317" width="0.900" height="0.900" fill="#e0a92a"/>
<rect x="1379.300" y="319.800" width="0.900" height="0.900" fill="#e0a92a"/><rect x="1382.200" y="319.800" width="0.900" height="0.900" fill="#e0a92a"/><rect x="1385.100" y="319.800" width="0.900" height="0.900" fill="#e0a92a"/>
</g>
<g>
<circle cx="1607" cy="315.600" r="4.200" fill="#f7cc55" stroke="#2a2a2a" stroke-width="1"/>
<rect x="1601.500" y="317.600" width="11" height="4" fill="#4bb5ef" stroke="#10222f" stroke-width="1"/>
</g>
<g>
<circle cx="1709.400" cy="260.900" r="6.500" fill="#2e7fe0" stroke="#05070c" stroke-width="1.300"/>
<path d="M1706.600 256.200 L1709.500 255 L1713 255.600 L1715.300 258.800 L1713.500 260.300 L1712.300 260 L1711.600 262.300 L1709.600 265.700 L1708.500 262.200 L1705.500 260.800 L1706.900 258.300 Z" fill="#59d43b"/>
</g>
<g>
<path d="M217.900 405.400 V395.400 L219 393.800 H222 L223.300 395.400 H231.200 V397.200 H234.300 L231 405.400 Z" fill="#f7d77c" stroke="#15130d" stroke-width="1.200" stroke-linejoin="round"/>
<path d="M219 394.300 H221.800 L222.600 395.300 H219 Z" fill="#e0452c"/>
<path d="M218.600 405 L221.400 397.800 H233.500 L230.700 405 Z" fill="#f9da82"/>
</g>
<g transform="translate(934.3 395)">
<path d="M1 5.800 L4.600 3.700 H9.400 L13 5.800 V9.400 Q13 10.400 12 10.400 H2 Q1 10.400 1 9.400 Z" fill="#bfd8f1" stroke="#1a1a22" stroke-width="1" stroke-linejoin="round"/>
<path d="M5.300 5.600 H8.700 L7 7.600 Z" fill="#4d8fe0"/>
<path d="M7 0.300 V4.400" stroke="#d2232a" stroke-width="1.700"/>
<path d="M4.900 3.600 H9.100 L7 5.900 Z" fill="#d2232a"/>
</g>
<g transform="translate(1153.3 395)">
<path d="M1 5.800 L4.600 3.700 H9.400 L13 5.800 V9.400 Q13 10.400 12 10.400 H2 Q1 10.400 1 9.400 Z" fill="#bfd8f1" stroke="#1a1a22" stroke-width="1" stroke-linejoin="round"/>
<path d="M5.300 5.600 H8.700 L7 7.600 Z" fill="#4d8fe0"/>
<path d="M7 0.300 V4.400" stroke="#d2232a" stroke-width="1.700"/>
<path d="M4.900 3.600 H9.100 L7 5.900 Z" fill="#d2232a"/>
</g>
<g transform="translate(1372.3 395)">
<path d="M1 5.800 L4.600 3.700 H9.400 L13 5.800 V9.400 Q13 10.400 12 10.400 H2 Q1 10.400 1 9.400 Z" fill="#bfd8f1" stroke="#1a1a22" stroke-width="1" stroke-linejoin="round"/>
<path d="M5.300 5.600 H8.700 L7 7.600 Z" fill="#4d8fe0"/>
<path d="M7 0.300 V4.400" stroke="#d2232a" stroke-width="1.700"/>
<path d="M4.900 3.600 H9.100 L7 5.900 Z" fill="#d2232a"/>
</g>
<g transform="translate(1597.3 395)">
<path d="M1 5.800 L4.600 3.700 H9.400 L13 5.800 V9.400 Q13 10.400 12 10.400 H2 Q1 10.400 1 9.400 Z" fill="#bfd8f1" stroke="#1a1a22" stroke-width="1" stroke-linejoin="round"/>
<path d="M5.300 5.600 H8.700 L7 7.600 Z" fill="#4d8fe0"/>
<path d="M7 0.300 V4.400" stroke="#d2232a" stroke-width="1.700"/>
<path d="M4.900 3.600 H9.100 L7 5.900 Z" fill="#d2232a"/>
</g>
<g>
<rect x="194.500" y="620.500" width="16.500" height="16" fill="#e9e9e9" stroke="#111" stroke-width="1.200"/>
<rect x="197.300" y="625.500" width="2.200" height="10.500" fill="#3db53d"/><rect x="201.600" y="628.500" width="2.200" height="7.500" fill="#e0442a"/><rect x="205.900" y="623.500" width="2.200" height="12.500" fill="#2f73d8"/>
</g>
<path d="M542.300 395.500 L547 400 L551.700 395.500" stroke="#111" stroke-width="2" fill="none"/>
<g>
<clipPath id="fclip"><rect x="1850" y="780" width="51" height="60"/></clipPath><g clip-path="url(#fclip)"><path d="M1905 792 H1886.900 A18 18 0 0 0 1886.900 828 H1905 Z" fill="#fff" style="filter:drop-shadow(0 1px 2.500px rgba(0,0,0,.28))"/></g>
<path d="M1884.300 802.800 Q1885.400 808.800 1891 809.900 Q1885.400 811 1884.300 817 Q1883.200 811 1877.600 809.900 Q1883.200 808.800 1884.300 802.800 Z" fill="#1f1f1f"/>
<path d="M1893 800.500 Q1893.500 803 1896 803.500 Q1893.500 804 1893 806.500 Q1892.500 804 1890 803.500 Q1892.500 803 1893 800.500 Z" fill="#1f1f1f"/>
<path d="M1893 813 Q1893.500 815.500 1896 816 Q1893.500 816.500 1893 819 Q1892.500 816.500 1890 816 Q1892.500 815.500 1893 813 Z" fill="#1f1f1f"/>
</g>
<path d="M1904 124 L1910.600 116.700 L1917.200 124 Z" fill="#8b8b8b"/><path d="M1904 1066 L1910.600 1073.300 L1917.200 1066 Z" fill="#8b8b8b"/>
</svg>
<div class="abs" style="left:0;top:1079px;width:1920px;height:1px;background:#000"></div>
</body>
</html>
